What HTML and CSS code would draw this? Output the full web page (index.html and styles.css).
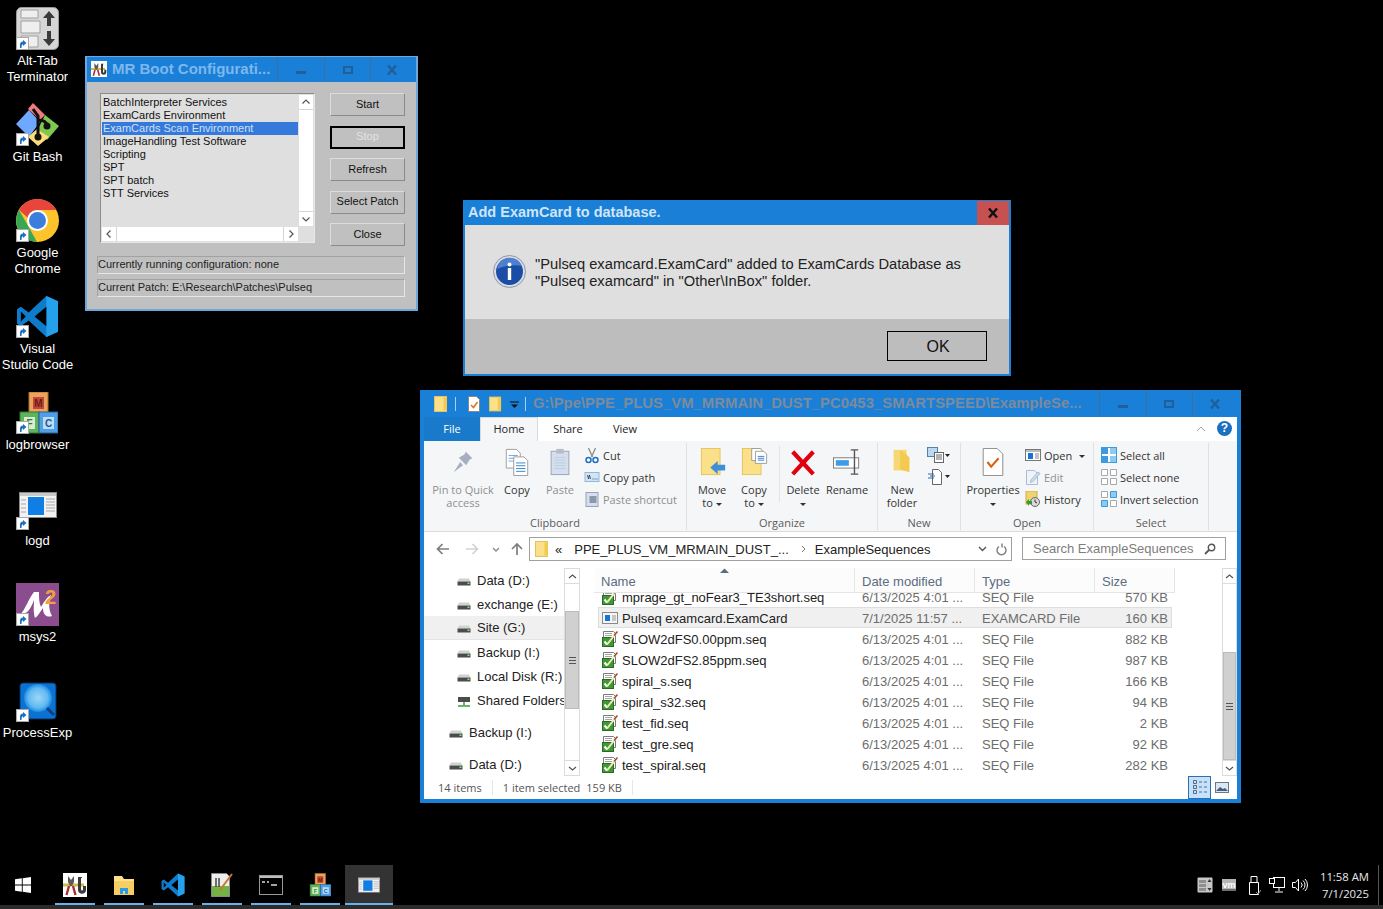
FILE: index.html
```html
<!DOCTYPE html>
<html lang="en">
<head>
  <meta charset="UTF-8">
  <title>Desktop</title>
  <link rel="stylesheet" href="styles.css">
</head>
<body>
  <!-- shared icons -->
  <svg class="defs" width="0" height="0" aria-hidden="true">
    <symbol id="i-shortcut" viewBox="0 0 13 13">
      <rect x=".5" y=".5" width="12" height="12" fill="#fff" stroke="#a8a8a8"/>
      <path d="M4 11V7.500C4 5.500 5.500 4.500 7 4.500V3l3.500 3L7 9V7.300C6 7.300 5.500 8.500 5.500 11z" fill="#1d6fc2"/>
    </symbol>
    <symbol id="i-vscode" viewBox="0 0 44 44">
      <path d="M31 1l12 5.500v31L31 43 13 26 5 32 1 29.500v-15L5 12l8 6z" fill="#0f7ccb"/>
      <path d="M31 1l12 5.500v31L31 43z" fill="#24a0ed"/>
      <path d="M31 12v20l-12-10z" fill="#000"/>
      <path d="M5 17v10l5-5z" fill="#000"/>
    </symbol>
    <symbol id="i-window" viewBox="0 0 38 26">
      <rect x=".5" y=".5" width="37" height="25" fill="#f2f2f2" stroke="#8a8a8a"/>
      <rect x="1" y="1" width="36" height="3" fill="#c9c9c9"/>
      <rect x="9" y="5" width="16" height="18" fill="#0f7fe6"/>
      <path d="M2 8h5M2 12h5M2 16h5M2 20h5M27 7h9M27 10h9M27 13h9M27 16h9M27 19h9" stroke="#a9a9a9"/>
    </symbol>
    <symbol id="i-drive" viewBox="0 0 14 8">
      <path d="M2 .5h10l1.500 3h-13z" fill="#d2d2d2"/>
      <rect x=".5" y="3.500" width="13" height="4" fill="#4c4c4c"/>
      <rect x="10.500" y="4.500" width="2" height="1.500" fill="#7fe07f"/>
    </symbol>
    <symbol id="i-seq" viewBox="0 0 16 16">
      <path d="M1.500.5h10l2 2v9h-2v4h-10z" fill="#fff" stroke="#7b7b7b"/>
      <path d="M3 2.500h7M3 4.500h7" stroke="#a5a5a5"/>
      <rect x=".5" y="6.500" width="11" height="9" fill="#3f9a34" stroke="#2a6a22"/>
      <path d="M2.500 10.500l2.500 3" fill="none" stroke="#fff" stroke-width="2"/>
      <path d="M5 13.500L15 1" stroke="#f2e9c0" stroke-width="2"/>
      <path d="M12 4.500L15.500 .5" stroke="#a0482a" stroke-width="1.500"/>
    </symbol>
    <symbol id="i-folder" viewBox="0 0 14 16">
      <rect x=".5" y=".5" width="12" height="15" fill="#fbe08a" stroke="#e5c25c"/>
      <path d="M9.500 1v14l3.500-1.500V2z" fill="#f4c94f"/>
    </symbol>
    <symbol id="i-x" viewBox="0 0 12 10">
      <path d="M2 .5l8 9M10 .5l-8 9" stroke="#1f5f9c" stroke-width="2.400"/>
    </symbol>
    <symbol id="i-boot" viewBox="0 0 24 24">
      <rect width="24" height="24" fill="#fff"/>
      <path d="M0 12h21" stroke="#d9b64a" stroke-width="3"/>
      <path d="M5 3l3 4 3-4v6l-2 4H7L5 9z" fill="#5a5a5a"/>
      <path d="M6 13L3.500 22M10 13l2.500 9" stroke="#a83030" stroke-width="2.400"/>
      <path d="M15 4h4v1h-1v11c0 2 2 2 2 0v-3h3v4c0 5-8 5-8 0z" fill="#3a3a3a"/>
    </symbol>
  </svg>

  <div class="desktop">
    <!-- desktop shortcuts -->
    <div class="shortcuts">
      <div class="shortcut">
        <div class="shortcut-icon">
          <svg width="43" height="43" viewBox="0 0 43 43">
            <rect x=".5" y=".5" width="42" height="42" rx="5" fill="#d6d6d6" stroke="#9a9a9a"/>
            <path d="M5 3h17v8H5zM5 14h19v12H5zM5 29h17v11H5z" fill="#efefef" stroke="#a0a0a0"/>
            <path d="M33 4l6 7h-4v8h-4v-8h-4zM33 39l6-7h-4v-8h-4v8h-4z" fill="#3a3a3a"/>
          </svg>
          <svg class="shortcut-arrow"><use href="#i-shortcut"/></svg>
        </div>
        <span>Alt-Tab<br>Terminator</span>
      </div>
      <div class="shortcut">
        <div class="shortcut-icon">
          <svg width="43" height="43" viewBox="0 0 43 43">
            <path d="M17 0l12 12-5 5L12 6z" fill="#f27c7c"/>
            <path d="M0 21L13 7l11 12-11 15z" fill="#6fa8ff"/>
            <path d="M29 12l14 11-12 14-9-11z" fill="#7ec850"/>
            <path d="M21 26l12 8-11 9-10-9z" fill="#ffdb7a"/>
            <path d="M17 6l5 7v20M22 17c3 0 8 1 9 5" fill="none" stroke="#111" stroke-width="3"/>
            <circle cx="22" cy="34" r="3.500" fill="#111"/>
            <circle cx="31" cy="23" r="3.500" fill="#111"/>
          </svg>
          <svg class="shortcut-arrow"><use href="#i-shortcut"/></svg>
        </div>
        <span>Git Bash</span>
      </div>
      <div class="shortcut">
        <div class="shortcut-icon">
          <svg width="43" height="43" viewBox="0 0 43 43">
            <circle cx="21.500" cy="21.500" r="21.500" fill="#fcc32c"/>
            <path d="M21.500 0a21.500 21.500 0 0 1 18.700 11H21.500a10.500 10.500 0 0 0-10 7.500L3 11A21.500 21.500 0 0 1 21.500 0z" fill="#e8453c"/>
            <path d="M3 11l10 17.500L21 43A21.500 21.500 0 0 1 3 11z" fill="#34a853"/>
            <circle cx="21.500" cy="21.500" r="10.500" fill="#fff"/>
            <circle cx="21.500" cy="21.500" r="8.500" fill="#3b7ede"/>
          </svg>
          <svg class="shortcut-arrow"><use href="#i-shortcut"/></svg>
        </div>
        <span>Google<br>Chrome</span>
      </div>
      <div class="shortcut">
        <div class="shortcut-icon">
          <svg width="43" height="43"><use href="#i-vscode"/></svg>
          <svg class="shortcut-arrow"><use href="#i-shortcut"/></svg>
        </div>
        <span>Visual<br>Studio Code</span>
      </div>
      <div class="shortcut">
        <div class="shortcut-icon">
          <svg width="40" height="42" viewBox="0 0 40 42">
            <rect x="11" y="0" width="19" height="21" fill="#eca45c" stroke="#a8702e"/>
            <rect x="15" y="5" width="11" height="12" fill="#c2473a"/>
            <text x="20.500" y="15" class="block-letter" fill="#6e1d14">M</text>
            <rect x="2" y="20" width="19" height="21" fill="#5fb35a" stroke="#2f7a33"/>
            <rect x="6" y="25" width="11" height="12" fill="#d9ecd2"/>
            <text x="11.500" y="35" class="block-letter" fill="#2f7a33">F</text>
            <rect x="21" y="20" width="19" height="21" fill="#4f9fe6" stroke="#26619c"/>
            <rect x="25" y="25" width="11" height="12" fill="#bcdcf6"/>
            <text x="30.500" y="35" class="block-letter" fill="#1d5a96">C</text>
          </svg>
          <svg class="shortcut-arrow"><use href="#i-shortcut"/></svg>
        </div>
        <span>logbrowser</span>
      </div>
      <div class="shortcut">
        <div class="shortcut-icon">
          <svg width="38" height="28" class="logd-pic"><use href="#i-window"/></svg>
          <svg class="shortcut-arrow"><use href="#i-shortcut"/></svg>
        </div>
        <span>logd</span>
      </div>
      <div class="shortcut">
        <div class="shortcut-icon">
          <svg width="43" height="43" viewBox="0 0 43 43">
            <rect width="43" height="43" fill="#8b4d8d"/>
            <path d="M4 32C9 27 13 15 18 9l5 0C23 15 23 20 25 24 28 19 31 14 35 12 33 18 32 26 36 33 31 35 27 32 27 25 24 29 22 33 19 35 17 29 18 22 18 17 15 25 12 31 4 32z" fill="#fff"/>
            <text x="29" y="21" class="msys-two">2</text>
          </svg>
          <svg class="shortcut-arrow"><use href="#i-shortcut"/></svg>
        </div>
        <span>msys2</span>
      </div>
      <div class="shortcut">
        <div class="shortcut-icon">
          <svg width="38" height="38" viewBox="0 0 38 38">
            <defs>
              <radialGradient id="pe-glow"><stop offset="0" stop-color="#9ad8f8"/><stop offset=".7" stop-color="#62b8f0"/><stop offset="1" stop-color="#1a8be6"/></radialGradient>
            </defs>
            <rect x="1" y="1" width="36" height="36" rx="3" fill="#0c72d2" stroke="#0a2f60"/>
            <circle cx="19" cy="16" r="14" fill="url(#pe-glow)"/>
            <path d="M28 26l7 7" stroke="#0a3f80" stroke-width="3"/>
          </svg>
          <svg class="shortcut-arrow"><use href="#i-shortcut"/></svg>
        </div>
        <span>ProcessExp</span>
      </div>
    </div>

    <!-- MR Boot window -->
    <div class="window boot">
      <div class="titlebar">
        <svg class="boot-icon"><use href="#i-boot"/></svg>
        <span class="title-text">MR Boot Configurati...</span>
        <div class="caption-btns">
          <span class="cap-btn"><i class="cap-min"></i></span>
          <span class="cap-btn"><i class="cap-max"></i></span>
          <span class="cap-btn"><svg width="12" height="10"><use href="#i-x"/></svg></span>
        </div>
      </div>
      <div class="boot-body">
        <div class="boot-top">
          <div class="boot-list">
            <ul>
              <li>BatchInterpreter Services</li>
              <li>ExamCards Environment</li>
              <li class="picked">ExamCards Scan Environment</li>
              <li>ImageHandling Test Software</li>
              <li>Scripting</li>
              <li>SPT</li>
              <li>SPT batch</li>
              <li>STT Services</li>
            </ul>
            <div class="boot-vscroll">
              <span><svg width="14" height="14" viewBox="0 0 14 14"><path d="M3.500 8.500L7 5l3.500 3.500" class="arrow"/></svg></span>
              <span><svg width="14" height="14" viewBox="0 0 14 14"><path d="M3.500 5.500L7 9l3.500-3.500" class="arrow"/></svg></span>
            </div>
            <div class="boot-hscroll">
              <span><svg width="14" height="14" viewBox="0 0 14 14"><path d="M8.500 3.500L5 7l3.500 3.500" class="arrow"/></svg></span>
              <span><svg width="14" height="14" viewBox="0 0 14 14"><path d="M5.500 3.500L9 7l-3.500 3.500" class="arrow"/></svg></span>
            </div>
          </div>
          <div class="boot-btns">
            <button type="button">Start</button>
            <button type="button" class="is-default" disabled>Stop</button>
            <button type="button">Refresh</button>
            <button type="button">Select Patch</button>
            <button type="button">Close</button>
          </div>
        </div>
        <div class="boot-status">Currently running configuration: none</div>
        <div class="boot-status">Current Patch: E:\Research\Patches\Pulseq</div>
      </div>
    </div>

    <!-- message box -->
    <div class="window dialog">
      <div class="dialog-title">
        <span>Add ExamCard to database.</span>
        <span class="dialog-close"><svg width="12" height="10" viewBox="0 0 12 10"><path d="M2 .5l8 9M10 .5l-8 9" stroke="#111" stroke-width="2.400"/></svg></span>
      </div>
      <div class="dialog-msg">
        <svg width="33" height="33" viewBox="0 0 33 33">
          <circle cx="16.500" cy="16.500" r="16" fill="#d8dde4" stroke="#8b97a8"/>
          <circle cx="16.500" cy="16.500" r="13.500" fill="#1c4da6"/>
          <path d="M4 14a13 13 0 0 1 25-3c-8-2-17 0-25 3z" fill="#4f7fcf"/>
          <circle cx="16.500" cy="9.500" r="2" fill="#fff"/>
          <rect x="14.800" y="13" width="3.400" height="12" fill="#fff"/>
        </svg>
        <p>"Pulseq examcard.ExamCard" added to ExamCards Database as<br>"Pulseq examcard" in "Other\InBox" folder.</p>
      </div>
      <div class="dialog-foot">
        <button type="button">OK</button>
      </div>
    </div>

    <!-- file explorer -->
    <div class="window explorer">
      <div class="ex-title">
        <svg width="14" height="16"><use href="#i-folder"/></svg>
        <i class="qat-sep"></i>
        <svg width="12" height="16" viewBox="0 0 12 16"><path d="M.5.5h8l3 3v12H.5z" fill="#fff" stroke="#888"/><path d="M3 9l2.500 2.500L9.500 6" fill="none" stroke="#d9741c" stroke-width="1.500"/></svg>
        <svg class="qat-folder" width="13" height="16"><use href="#i-folder"/></svg>
        <svg class="qat-down" width="9" height="8" viewBox="0 0 9 8"><path d="M0 1h9" stroke="#111"/><path d="M1 3.500h7L4.500 7z" fill="#111"/></svg>
        <i class="qat-sep"></i>
        <span class="ex-path">G:\Ppe\PPE_PLUS_VM_MRMAIN_DUST_PC0453_SMARTSPEED\ExampleSe...</span>
        <div class="ex-caption">
          <span class="cap-btn"><i class="cap-min"></i></span>
          <span class="cap-btn"><i class="cap-max"></i></span>
          <span class="cap-btn"><svg width="12" height="10"><use href="#i-x"/></svg></span>
        </div>
      </div>

      <div class="tabs">
        <span class="tab tab-file">File</span>
        <span class="tab tab-home">Home</span>
        <span class="tab tab-share">Share</span>
        <span class="tab tab-view">View</span>
        <svg class="tabs-chevron" width="10" height="6" viewBox="0 0 10 6"><path d="M1 5l4-4 4 4" fill="none" stroke="#a8a8a8"/></svg>
        <span class="help-dot">?</span>
      </div>

      <div class="ribbon">
        <section class="group group-clipboard">
          <div class="group-items">
            <div class="big w70 faded">
              <svg width="24" height="28" viewBox="0 0 24 30"><path d="M15 4l7 7-3 1.500-3.500 6-8-8 6-3.500zM9 15l-7 11 10-7.500z" fill="#a5afc0"/></svg>
              <span>Pin to Quick<br>access</span>
            </div>
            <div class="big w38">
              <svg width="26" height="28" viewBox="0 0 26 30"><path d="M1.500 1.500h11l4 4v16h-15z" fill="#fff" stroke="#9a9a9a"/><path d="M4 8h10M4 11h10M4 14h10" stroke="#6aa5e0"/><path d="M9.500 9.500h11l4 4v16h-15z" fill="#fff" stroke="#9a9a9a"/><path d="M12 16h10M12 19h10M12 22h10M12 25h10" stroke="#2f7fd0"/></svg>
              <span>Copy</span>
            </div>
            <div class="big w48 faded">
              <svg width="22" height="28" viewBox="0 0 22 30"><rect x="1.500" y="3.500" width="19" height="25" fill="#d5dff0" stroke="#9aa3b0"/><rect x="7" y="1" width="8" height="5" fill="#b6bdc8"/><path d="M5 10h12M5 13h12M5 16h12M5 19h12M5 22h12" stroke="#bcc9de"/></svg>
              <span>Paste</span>
            </div>
            <div class="small-col">
              <div class="small">
                <svg width="15" height="17" viewBox="0 0 15 17"><path d="M4 1l4 9M11 1L7 10" stroke="#8a8a8a" stroke-width="1.300"/><circle cx="4" cy="13" r="2.500" fill="none" stroke="#1d6fc2" stroke-width="1.500"/><circle cx="11" cy="13" r="2.500" fill="none" stroke="#1d6fc2" stroke-width="1.500"/></svg>
                <span>Cut</span>
              </div>
              <div class="small">
                <svg width="15" height="10" viewBox="0 0 15 10"><rect x=".5" y=".5" width="14" height="9" fill="#cfe5f8" stroke="#8fb8dc"/><path d="M3 3l1 4 1-4 1 4M8 7h1M10 7h1M12 7h1" fill="none" stroke="#333" stroke-width=".8"/></svg>
                <span>Copy path</span>
              </div>
              <div class="small faded">
                <svg width="13" height="16" viewBox="0 0 13 16"><rect x=".5" y="1.500" width="12" height="14" fill="#d5dff0" stroke="#9aa3b0"/><rect x="4" y="5" width="7" height="7" fill="#8b98ac"/></svg>
                <span>Paste shortcut</span>
              </div>
            </div>
          </div>
          <h4>Clipboard</h4>
        </section>

        <section class="group group-organize">
          <div class="group-items">
            <div class="big w42">
              <svg class="move-pic" width="27" height="28" viewBox="0 0 27 30"><rect x=".5" y=".5" width="20" height="28" fill="#fbe08a" stroke="#e5c25c"/><path d="M10 21l8-7v4h8v6h-8v4z" fill="#3f8fd8"/></svg>
              <span>Move<br>to <b class="caret"></b></span>
            </div>
            <div class="big w42">
              <svg width="27" height="28" viewBox="0 0 27 30"><rect x=".5" y=".5" width="20" height="28" fill="#fbe08a" stroke="#e5c25c"/><path d="M10.500 .5h9l3 3v10h-12z" fill="#fff" stroke="#999"/><path d="M14.500 3.500h9l3 3v10h-12z" fill="#fff" stroke="#999"/><path d="M17 9h7M17 11h7M17 13h7" stroke="#2f7fd0"/></svg>
              <span>Copy<br>to <b class="caret"></b></span>
            </div>
            <i class="group-rule"></i>
            <div class="big w46">
              <svg width="26" height="28" viewBox="0 0 26 30"><path d="M2 4l22 24M24 4L2 28" stroke="#e0000f" stroke-width="4.500"/></svg>
              <span>Delete<br><b class="caret"></b></span>
            </div>
            <div class="big w42">
              <svg width="30" height="28" viewBox="0 0 30 30"><rect x=".5" y="10.500" width="27" height="11" fill="#fff" stroke="#777"/><rect x="3" y="13" width="14" height="6" fill="#3f9be8"/><path d="M19 2h8M19 28h8M23 2v26" stroke="#555" stroke-width="1.500"/></svg>
              <span>Rename</span>
            </div>
          </div>
          <h4>Organize</h4>
        </section>

        <section class="group group-new">
          <div class="group-items">
            <div class="big w44">
              <svg width="22" height="28" viewBox="0 0 22 30"><path d="M2 2l14 0v22H2z" fill="#f7d774"/><path d="M9 2l10 8v16l-10-3z" fill="#f4c94f"/></svg>
              <span>New<br>folder</span>
            </div>
            <div class="small-col new-col">
              <div class="small">
                <svg width="23" height="16" viewBox="0 0 23 16"><rect x=".5" y=".5" width="10" height="9" fill="#bcd8f2" stroke="#5a7fa6"/><rect x="7.500" y="5.500" width="9" height="10" fill="#fff" stroke="#666"/><path d="M9 8h6M9 10h6M9 12h6" stroke="#666"/><path d="M18 7h5l-2.500 3z" fill="#222"/></svg>
              </div>
              <div class="small">
                <svg width="23" height="16" viewBox="0 0 23 16"><path d="M5.500.5h6l3 3v12h-9z" fill="#fff" stroke="#666"/><path d="M1 5h6M3 7h5M1 9h6" stroke="#2f6ea8"/><path d="M18 6h5l-2.500 3z" fill="#222"/></svg>
              </div>
            </div>
          </div>
          <h4>New</h4>
        </section>

        <section class="group group-open">
          <div class="group-items">
            <div class="big w56">
              <svg width="22" height="28" viewBox="0 0 22 30"><path d="M.5.5h15l6 6v23H.500z" fill="#fff" stroke="#888"/><path d="M5 15l4 5 8-9" fill="none" stroke="#d9620f" stroke-width="2.200"/></svg>
              <span>Properties<br><b class="caret"></b></span>
            </div>
            <div class="small-col open-col">
              <div class="small">
                <svg width="16" height="12" viewBox="0 0 16 12"><rect x=".5" y=".5" width="15" height="11" fill="#fff" stroke="#777"/><rect x="1" y="1" width="14" height="2" fill="#bbb"/><rect x="3" y="4" width="5" height="6" fill="#1473d8"/><path d="M10 5h4M10 7h4M10 9h4" stroke="#888"/></svg>
                <span>Open <b class="caret caret-far"></b></span>
              </div>
              <div class="small faded">
                <svg width="16" height="16" viewBox="0 0 16 16"><path d="M1.500 1.500h8l3 3v11h-11z" fill="#eef3fa" stroke="#a9bcd6"/><path d="M6 11l7-8 2 1.500-7 8-2.500 1z" fill="#cfdcec" stroke="#a9bcd6"/></svg>
                <span>Edit</span>
              </div>
              <div class="small">
                <svg width="16" height="16" viewBox="0 0 16 16"><rect x="1" y="0" width="11" height="13" fill="#f0d36e" stroke="#cdac43"/><circle cx="10" cy="11" r="4.500" fill="#d8d8d8" stroke="#666"/><path d="M10 8.500V11l2 1" fill="none" stroke="#333"/><path d="M1 11l3-3v2h3v3H4v2z" fill="#2f9e3b"/></svg>
                <span>History</span>
              </div>
            </div>
          </div>
          <h4>Open</h4>
        </section>

        <section class="group group-select">
          <div class="group-items">
            <div class="small-col select-col">
              <div class="small">
                <svg width="16" height="16" viewBox="0 0 16 16"><rect x=".5" y=".5" width="15" height="15" fill="#fff" stroke="#3c9be0"/><rect x="1" y="1" width="6" height="6" fill="#3c9be0"/><rect x="9" y="1" width="6" height="6" fill="#8fcbef"/><rect x="1" y="9" width="6" height="6" fill="#3c9be0"/><rect x="9" y="9" width="6" height="6" fill="#8fcbef"/></svg>
                <span>Select all</span>
              </div>
              <div class="small">
                <svg width="16" height="16" viewBox="0 0 16 16"><path d="M.5.5h6v6h-6zM9.500.5h6v6h-6zM.5 9.500h6v6h-6zM9.500 9.500h6v6h-6z" fill="#fff" stroke="#a8a8a8"/></svg>
                <span>Select none</span>
              </div>
              <div class="small">
                <svg width="16" height="16" viewBox="0 0 16 16"><path d="M.5.5h6v6h-6zM9.500 9.500h6v6h-6z" fill="#fff" stroke="#a8a8a8"/><path d="M9.500.5h6v6h-6zM.5 9.500h6v6h-6z" fill="#8fcbef" stroke="#3c9be0"/></svg>
                <span>Invert selection</span>
              </div>
            </div>
          </div>
          <h4>Select</h4>
        </section>
      </div>

      <div class="address-row">
        <div class="nav-arrows">
          <svg width="14" height="12" viewBox="0 0 14 12"><path d="M13 6H2M6.500 1L1.500 6l5 5" fill="none" stroke="#7d7d7d" stroke-width="1.700"/></svg>
          <svg class="nav-fwd" width="14" height="12" viewBox="0 0 14 12"><path d="M1 6h11M7.500 1l5 5-5 5" fill="none" stroke="#d2d2d2" stroke-width="1.700"/></svg>
          <svg class="nav-down" width="8" height="5" viewBox="0 0 8 5"><path d="M1 1l3 3 3-3" fill="none" stroke="#888" stroke-width="1.300"/></svg>
          <svg class="nav-up" width="12" height="14" viewBox="0 0 12 14"><path d="M6 13V2M1 7l5-5 5 5" fill="none" stroke="#7d7d7d" stroke-width="1.700"/></svg>
        </div>
        <div class="address">
          <svg width="14" height="16"><use href="#i-folder"/></svg>
          <span class="crumb-more">«</span>
          <span class="crumb">PPE_PLUS_VM_MRMAIN_DUST_...</span>
          <svg class="crumb-sep" width="5" height="8" viewBox="0 0 5 8"><path d="M1 1l3 3-3 3" fill="none" stroke="#777"/></svg>
          <span class="crumb-last">ExampleSequences</span>
          <svg class="addr-down" width="9" height="6" viewBox="0 0 9 6"><path d="M1 1l3.500 3.500L8 1" fill="none" stroke="#555" stroke-width="1.400"/></svg>
          <svg class="addr-refresh" width="11" height="13" viewBox="0 0 11 13"><path d="M3 3.500a4.500 4.500 0 1 0 5 0M6 .5v4" fill="none" stroke="#7d7d7d" stroke-width="1.400"/></svg>
        </div>
        <div class="search">
          <span>Search ExampleSequences</span>
          <svg width="12" height="12" viewBox="0 0 12 12"><circle cx="7.500" cy="4.500" r="3.200" fill="none" stroke="#555" stroke-width="1.400"/><path d="M5 7l-4 4" stroke="#555" stroke-width="1.800"/></svg>
        </div>
      </div>

      <div class="panes">
        <div class="tree">
          <div class="tree-row"><svg width="14" height="8"><use href="#i-drive"/></svg>Data (D:)</div>
          <div class="tree-row"><svg width="14" height="8"><use href="#i-drive"/></svg>exchange (E:)</div>
          <div class="tree-row is-on"><svg width="14" height="8"><use href="#i-drive"/></svg>Site (G:)</div>
          <div class="tree-row"><svg width="14" height="8"><use href="#i-drive"/></svg>Backup (I:)</div>
          <div class="tree-row"><svg width="14" height="8"><use href="#i-drive"/></svg>Local Disk (R:)</div>
          <div class="tree-row"><svg width="14" height="10" viewBox="0 0 14 10"><rect x="1" y="0" width="12" height="5" fill="#4c4c4c"/><path d="M7 5v3M1 9h12" stroke="#3e9b3e" stroke-width="1.500"/></svg>Shared Folders</div>
          <div class="tree-row tree-top"><svg width="14" height="8"><use href="#i-drive"/></svg>Backup (I:)</div>
          <div class="tree-row tree-top tree-last"><svg width="14" height="8"><use href="#i-drive"/></svg>Data (D:)</div>
        </div>
        <div class="scrollbar tree-scroll">
          <span class="sb-btn"><svg width="9" height="5" viewBox="0 0 9 5"><path d="M1 4l3.500-3L8 4" class="arrow"/></svg></span>
          <span class="sb-thumb"><i></i></span>
          <span class="sb-btn"><svg width="9" height="5" viewBox="0 0 9 5"><path d="M1 1l3.500 3L8 1" class="arrow"/></svg></span>
        </div>
        <div class="files">
          <div class="file-head">
            <span class="col-name">Name<svg class="sort-mark" width="9" height="5" viewBox="0 0 9 5"><path d="M0 5l4.500-4.500L9 5z" fill="#5b6b80"/></svg></span>
            <span class="col-date">Date modified</span>
            <span class="col-type">Type</span>
            <span class="col-size">Size</span>
          </div>
          <div class="file-body">
            <div class="file-rows">
              <div class="file-row"><span class="col-name"><svg width="16" height="16"><use href="#i-seq"/></svg>mprage_gt_noFear3_TE3short.seq</span><span class="col-date">6/13/2025 4:01 ...</span><span class="col-type">SEQ File</span><span class="col-size">570 KB</span></div>
              <div class="file-row is-on"><span class="col-name"><svg width="16" height="16" viewBox="0 0 16 16"><rect x=".5" y="2.500" width="15" height="11" fill="#f4f4f4" stroke="#8a8a8a"/><rect x="3" y="5" width="5" height="6" fill="#1473d8"/><path d="M10 6h4M10 8h4M10 10h4" stroke="#999"/></svg>Pulseq examcard.ExamCard</span><span class="col-date">7/1/2025 11:57 ...</span><span class="col-type">EXAMCARD File</span><span class="col-size">160 KB</span></div>
              <div class="file-row"><span class="col-name"><svg width="16" height="16"><use href="#i-seq"/></svg>SLOW2dFS0.00ppm.seq</span><span class="col-date">6/13/2025 4:01 ...</span><span class="col-type">SEQ File</span><span class="col-size">882 KB</span></div>
              <div class="file-row"><span class="col-name"><svg width="16" height="16"><use href="#i-seq"/></svg>SLOW2dFS2.85ppm.seq</span><span class="col-date">6/13/2025 4:01 ...</span><span class="col-type">SEQ File</span><span class="col-size">987 KB</span></div>
              <div class="file-row"><span class="col-name"><svg width="16" height="16"><use href="#i-seq"/></svg>spiral_s.seq</span><span class="col-date">6/13/2025 4:01 ...</span><span class="col-type">SEQ File</span><span class="col-size">166 KB</span></div>
              <div class="file-row"><span class="col-name"><svg width="16" height="16"><use href="#i-seq"/></svg>spiral_s32.seq</span><span class="col-date">6/13/2025 4:01 ...</span><span class="col-type">SEQ File</span><span class="col-size">94 KB</span></div>
              <div class="file-row"><span class="col-name"><svg width="16" height="16"><use href="#i-seq"/></svg>test_fid.seq</span><span class="col-date">6/13/2025 4:01 ...</span><span class="col-type">SEQ File</span><span class="col-size">2 KB</span></div>
              <div class="file-row"><span class="col-name"><svg width="16" height="16"><use href="#i-seq"/></svg>test_gre.seq</span><span class="col-date">6/13/2025 4:01 ...</span><span class="col-type">SEQ File</span><span class="col-size">92 KB</span></div>
              <div class="file-row"><span class="col-name"><svg width="16" height="16"><use href="#i-seq"/></svg>test_spiral.seq</span><span class="col-date">6/13/2025 4:01 ...</span><span class="col-type">SEQ File</span><span class="col-size">282 KB</span></div>
            </div>
          </div>
        </div>
        <div class="scrollbar list-scroll">
          <span class="sb-btn"><svg width="9" height="5" viewBox="0 0 9 5"><path d="M1 4l3.500-3L8 4" class="arrow"/></svg></span>
          <span class="sb-thumb"><i></i></span>
          <span class="sb-btn"><svg width="9" height="5" viewBox="0 0 9 5"><path d="M1 1l3.500 3L8 1" class="arrow"/></svg></span>
        </div>
      </div>

      <div class="statusbar">
        <span class="st-count">14 items</span>
        <span class="st-sel">1 item selected</span>
        <span class="st-size">159 KB</span>
        <span class="st-views">
          <span class="view-btn is-on"><svg width="16" height="16" viewBox="0 0 16 16"><path d="M1.500 1.500h3v3h-3zM1.500 6.500h3v3h-3zM1.500 11.500h3v3h-3z" fill="none" stroke="#5a6c80"/><path d="M7 3h3M12 3h3M7 8h3M12 8h3M7 13h3M12 13h3" stroke="#5a6c80"/></svg></span>
          <span class="view-btn"><svg width="14" height="11" viewBox="0 0 14 11"><rect x=".5" y=".5" width="13" height="10" fill="#dbe7f2" stroke="#6b7888"/><path d="M1 9l4-4 3 2 2-1 3 3z" fill="#43607f"/></svg></span>
        </span>
      </div>
    </div>

    <!-- taskbar -->
    <div class="taskbar">
      <div class="start">
        <svg width="16" height="16" viewBox="0 0 16 16"><path d="M0 2.300l6.800-1v6.200H0zM7.700 1.200L16 0v7.500H7.700zM0 8.400h6.800v6.300l-6.800-1zM7.700 8.400H16V16l-8.300-1.200z" fill="#fff"/></svg>
      </div>
      <div class="task">
        <svg width="24" height="24"><use href="#i-boot"/></svg>
      </div>
      <div class="task">
        <svg width="22" height="20" viewBox="0 0 22 20"><path d="M1 1h8l2 3h10v16H1z" fill="#fce08a"/><path d="M1 6h20v14H1z" fill="#f6cf62"/><path d="M7 19v-6h8v6h-3v-3h-2v3z" fill="#2a9be8"/></svg>
      </div>
      <div class="task">
        <svg width="24" height="24"><use href="#i-vscode"/></svg>
      </div>
      <div class="task">
        <svg width="22" height="24" viewBox="0 0 22 24"><path d="M.5.5h15l3 3v20H.5z" fill="#eee" stroke="#888"/><rect x="1" y="13" width="17" height="10" fill="#74b247"/><path d="M5 5v9M8 5v9" stroke="#444" stroke-width="1.500"/><path d="M9 17L21 1" stroke="#c9792e" stroke-width="2"/></svg>
      </div>
      <div class="task">
        <svg width="24" height="20" viewBox="0 0 24 20"><rect x=".5" y=".5" width="23" height="19" fill="#000" stroke="#999"/><rect x="1" y="1" width="22" height="2" fill="#bdbdbd"/><path d="M3 7h3M8 7h2M12 10h6" stroke="#d8d8d8" stroke-width="1.500"/></svg>
      </div>
      <div class="task">
        <svg width="22" height="24" viewBox="0 0 40 42">
          <rect x="11" y="0" width="19" height="21" fill="#eca45c" stroke="#a8702e"/>
          <rect x="15" y="5" width="11" height="12" fill="#c2473a"/>
          <text x="20.500" y="15" class="block-letter" fill="#6e1d14">M</text>
          <rect x="2" y="20" width="19" height="21" fill="#5fb35a" stroke="#2f7a33"/>
          <rect x="6" y="25" width="11" height="12" fill="#d9ecd2"/>
          <text x="11.500" y="35" class="block-letter" fill="#2f7a33">F</text>
          <rect x="21" y="20" width="19" height="21" fill="#4f9fe6" stroke="#26619c"/>
          <rect x="25" y="25" width="11" height="12" fill="#bcdcf6"/>
          <text x="30.500" y="35" class="block-letter" fill="#1d5a96">C</text>
        </svg>
      </div>
      <div class="task task-active">
        <svg width="22" height="16"><use href="#i-window"/></svg>
      </div>

      <div class="tray">
        <svg class="tray-alt" width="16" height="16" viewBox="0 0 16 16"><rect x=".5" y=".5" width="15" height="15" rx="1" fill="#c8c8c8"/><path d="M2 3h7v3H2zM2 7h7v3H2zM2 11h7v3H2z" fill="#8e8e8e"/><path d="M12.500 2l2 3h-4zM12.500 14l2-3h-4z" fill="#333"/></svg>
        <svg class="tray-vm" width="14" height="12" viewBox="0 0 14 12"><rect width="14" height="12" fill="#b5b5b5"/><rect y="10" width="14" height="2" fill="#6e6e6e"/><text x="7" y="8.500" class="vm-mark">vm</text></svg>
        <svg class="tray-usb" width="13" height="19" viewBox="0 0 13 19"><path d="M3 .5h6v6H3zM1.500 6.500h9v12h-9z" fill="none" stroke="#fff"/><path d="M8 16l2 2 3-4" fill="none" stroke="#999"/></svg>
        <svg class="tray-net" width="16" height="16" viewBox="0 0 16 16"><rect x="4.500" y=".5" width="11" height="10" fill="none" stroke="#fff"/><rect x=".5" y="1.500" width="5" height="5" fill="#000" stroke="#fff"/><path d="M10 11v3M6 15h8" stroke="#fff"/></svg>
        <svg class="tray-vol" width="16" height="14" viewBox="0 0 16 14"><path d="M.5 4.500h3l3-3.500v12l-3-3.500h-3z" fill="none" stroke="#fff"/><path d="M9 4.500a3.500 3.500 0 0 1 0 5M11 2.500a6 6 0 0 1 0 9M13 1a8.500 8.500 0 0 1 0 12" fill="none" stroke="#fff"/></svg>
        <div class="clock"><span>11:58 AM</span><span>7/1/2025</span></div>
        <i class="show-desktop"></i>
      </div>
    </div>
  </div>
</body>
</html>
```

FILE: styles.css
```css
* { box-sizing: border-box; }
html, body { margin: 0; height: 100%; }
body {
  background: #000;
  font-family: "Liberation Sans", Arial, sans-serif;
  overflow: hidden;
}
.defs { position: absolute; }
svg { display: block; flex: none; }
.arrow { fill: none; stroke: #555; stroke-width: 1.2; }
.block-letter { font: bold 10px "Liberation Sans", sans-serif; text-anchor: middle; }
.msys-two { font: bold 20px "Liberation Sans", sans-serif; fill: #f0a13c; }
.vm-mark { font: bold 9px "Liberation Sans", sans-serif; fill: #fff; text-anchor: middle; }

.desktop { position: relative; width: 1383px; height: 909px; background: #000; }

/* desktop icons */
.shortcuts {
  position: absolute;
  left: 0;
  top: 8px;
  display: grid;
  grid-auto-rows: 96px;
  width: 75px;
}
.shortcut {
  display: flex;
  flex-direction: column;
  align-items: center;
  color: #fff;
  font-size: 13px;
  line-height: 16px;
  text-align: center;
  white-space: nowrap;
}
.shortcut-icon {
  position: relative;
  width: 43px;
  height: 43px;
  margin: -1px 0 3px;
  display: flex;
  align-items: center;
  justify-content: center;
}
.shortcut-arrow { position: absolute; left: 0; bottom: 0; width: 13px; height: 13px; }
.logd-pic { margin-top: -8px; }

/* windows */
.window { position: absolute; }
.cap-btn {
  display: flex;
  align-items: center;
  justify-content: center;
  border-left: 1px solid #3f6f9d;
}
.cap-min { width: 10px; height: 3px; margin-top: 5px; background: #1f5f9c; }
.cap-max { width: 10px; height: 8px; border: 2px solid #1f5f9c; }

/* MR Boot */
.boot {
  left: 85px;
  top: 56px;
  width: 333px;
  height: 255px;
  background: #c0c0c0;
  border: 1px solid #6ea7db;
  border-width: 1px 2px 2px;
  font-size: 11px;
  line-height: 13px;
  color: #000;
}
.titlebar {
  height: 25px;
  background: #1a7fd6;
  display: flex;
  align-items: center;
  padding-left: 4px;
}
.boot-icon { width: 16px; height: 16px; margin-top: -1px; }
.title-text { margin: -2px 0 0 5px; font: bold 15px "Liberation Sans", sans-serif; color: #7cb8ee; }
.caption-btns {
  margin-left: auto;
  height: 100%;
  display: grid;
  grid-template-columns: 47px 46px 46px;
}
.caption-btns .cap-btn:last-child { padding-right: 3px; }
.boot-body { padding: 11px 11px 0 10px; }
.boot-top { display: flex; padding-left: 3px; }
.boot-list {
  width: 216px;
  height: 150px;
  border: 1px solid #e8e8e8;
  border-top-color: #8c8c8c;
  border-left-color: #8c8c8c;
  display: grid;
  grid-template-columns: 1fr 15px;
  grid-template-rows: 1fr 15px;
  padding: 1px;
  background: #dfdfdf;
}
.boot-list ul { list-style: none; margin: 0; padding: 1px 0 0; }
.boot-list li { height: 13px; padding-left: 1px; white-space: nowrap; color: #111; }
.boot-list li.picked { background: #3579db; color: #cfe0f5; }
.boot-vscroll {
  background: #fff;
  display: flex;
  flex-direction: column;
  justify-content: space-between;
  margin-left: 1px;
}
.boot-vscroll span { height: 15px; display: flex; align-items: center; justify-content: center; border: solid #d4d4d4; border-width: 0 0 1px; }
.boot-vscroll span:last-child { border-width: 1px 0 0; }
.boot-hscroll {
  background: #fff;
  display: flex;
  justify-content: space-between;
  margin-top: 1px;
}
.boot-hscroll span { width: 15px; display: flex; align-items: center; justify-content: center; border: solid #d4d4d4; border-width: 0 1px 0 0; }
.boot-hscroll span:last-child { border-width: 0 0 0 1px; }
.boot-btns {
  margin-left: 15px;
  display: grid;
  grid-template-columns: 75px;
  grid-auto-rows: 23px;
  row-gap: 9.500px;
}
.boot-btns button {
  background: #c0c0c0;
  border: 1px solid;
  border-color: #dcdcdc #8a8a8a #8a8a8a #dcdcdc;
  font: 11px "Liberation Sans", sans-serif;
  color: #111;
  padding: 0 0 2px;
}
.boot-btns .is-default { border: 2px solid #000; color: #e2e2e2; }
.boot-status {
  height: 18px;
  margin-top: 5px;
  border: 1px solid #e6e6e6;
  border-top-color: #a2a2a2;
  border-left-color: #a2a2a2;
  padding: 1px 0 0;
  color: #222;
}
.boot-top + .boot-status { margin-top: 10px; }

/* message box */
.dialog {
  left: 463px;
  top: 200px;
  width: 548px;
  height: 176px;
  border: 2px solid #1a7fd6;
  border-top-width: 0;
  display: flex;
  flex-direction: column;
  background: #dfdfdf;
}
.dialog-title {
  height: 25px;
  background: #1a7fd6;
  display: flex;
  justify-content: space-between;
  align-items: center;
  padding-left: 3px;
  font: bold 14.500px "Liberation Sans", sans-serif;
  color: #cfe5f9;
}
.dialog-title > span:first-child { margin-top: -2px; }
.dialog-close {
  width: 32px;
  height: 24px;
  margin-top: 1px;
  background: #c75050;
  display: flex;
  align-items: center;
  justify-content: center;
}
.dialog-msg {
  height: 94px;
  padding: 30px 0 0 28px;
  display: flex;
  align-items: flex-start;
}
.dialog-msg p {
  margin: 1px 0 0 9px;
  font-size: 14.700px;
  line-height: 17px;
  color: #222;
}
.dialog-foot {
  flex: 1;
  background: #bdbdbd;
  display: flex;
  justify-content: flex-end;
  padding: 12px 22px 0 0;
}
.dialog-foot button {
  width: 100px;
  height: 30px;
  padding: 2px 0 0 2px;
  background: #bdbdbd;
  border: 1px solid #000;
  font: 16px "Liberation Sans", sans-serif;
  color: #111;
}

/* explorer */
.explorer {
  left: 420px;
  top: 390px;
  width: 821px;
  height: 413px;
  background: #fff;
  border: 4px solid #1a7fd6;
  border-top-width: 0;
  color: #222;
}
.ex-title {
  height: 27px;
  margin: 0 -4px;
  padding-left: 14px;
  background: #1a7fd6;
  display: flex;
  align-items: center;
}
.qat-sep { width: 1px; height: 14px; background: #a9d0f0; margin: 0 12px 0 7px; }
.qat-folder { margin-left: 9px; }
.qat-down { margin: 2px 0 0 8px; }
.ex-title .qat-down + .qat-sep { margin: 0 7px 0 6px; }
.ex-path { margin-top: -2px; font: bold 14.900px "Liberation Sans", sans-serif; color: #7c8b9c; white-space: nowrap; }
.ex-caption {
  margin-left: auto;
  height: 100%;
  display: grid;
  grid-template-columns: 47px 46px 49px;
}
.ex-caption .cap-btn:nth-child(2) { padding-right: 2px; }
.ex-caption .cap-btn:last-child { padding-right: 5px; }

.tabs {
  height: 24px;
  display: flex;
  align-items: stretch;
  background: #fff;
  font: 11px "Open Sans", sans-serif;
  position: relative;
}
.tab { display: flex; align-items: center; justify-content: center; padding-bottom: 2px; }
.tab-file { width: 56px; background: #1979ca; color: #fff; }
.tab-home { width: 58px; border: 1px solid #dadbdc; border-width: 1px 1px 0; background: #f5f6f7; }
.tab-share { margin-left: 15px; width: 30px; }
.tab-view { margin-left: 29px; width: 26px; }
.tabs-chevron { margin: 9px 0 0 auto; }
.help-dot {
  width: 15px;
  height: 15px;
  border-radius: 50%;
  background: #1a6fc0;
  color: #fff;
  font: bold 12px/15px "Liberation Sans", sans-serif;
  text-align: center;
  margin: 4px 5px 0 11px;
}

.ribbon {
  height: 92px;
  background: #f5f6f7;
  border-bottom: 1px solid #dadbdc;
  border-top: 1px solid #dadbdc;
  margin-top: -1px;
  display: flex;
  font: 11px/13px "Open Sans", sans-serif;
  color: #333;
}
.group {
  display: flex;
  flex-direction: column;
  justify-content: space-between;
  border-right: 1px solid #dfe0e1;
  margin: 2px 0 1px;
}
.group h4 {
  margin: 0;
  font: 11px/14px "Open Sans", sans-serif;
  color: #5b5b5b;
  text-align: center;
}
.group-items { display: flex; padding-left: 4px; }
.group-clipboard { width: 263px; }
.group-organize { width: 191px; }
.group-new { width: 83px; }
.group-new .group-items { padding-left: 2px; }
.group-open { width: 133px; }
.group-select { width: 115px; }
.big {
  display: flex;
  flex-direction: column;
  align-items: center;
  text-align: center;
  padding-top: 5px;
  white-space: nowrap;
}
.big span { margin-top: 7px; }
.move-pic { margin-left: 3px; }
.w38 { width: 38px; }
.w42 { width: 42px; }
.w44 { width: 44px; }
.w46 { width: 46px; }
.w48 { width: 48px; }
.w56 { width: 56px; }
.w70 { width: 70px; }
.faded { color: #8f8f8f; }
.caret {
  display: inline-block;
  width: 0;
  height: 0;
  border: 3px solid transparent;
  border-top: 3px solid #333;
  border-bottom: 0;
  vertical-align: middle;
}
.caret-far { margin-left: 4px; }
.group-rule { width: 1px; height: 56px; margin: 3px 0 0 4px; background: #e2e3e4; }
.small-col { display: grid; grid-auto-rows: 22px; padding-top: 1px; }
.small {
  display: flex;
  align-items: center;
  gap: 3px;
  white-space: nowrap;
}
.small-col .small > svg { width: 16px; }
.new-col .small > svg { width: 23px; }
.new-col { margin-left: 3px; }
.open-col { margin-left: 4px; }
.select-col { margin-left: 3px; }

.address-row {
  height: 24px;
  margin-top: 5px;
  display: flex;
  align-items: stretch;
}
.nav-arrows {
  width: 105px;
  padding: 0 6px 0 12px;
  display: flex;
  align-items: center;
}
.nav-fwd { margin-left: 15px; }
.nav-down { margin-left: 13px; }
.nav-up { margin-left: 11px; }
.address {
  width: 483px;
  border: 1px solid #a0a0a0;
  display: flex;
  align-items: center;
  padding-left: 5px;
  font: 13px "Liberation Sans", sans-serif;
  color: #222;
  white-space: nowrap;
}
.crumb-more { margin-left: 6px; }
.crumb { margin-left: 12px; }
.crumb-sep { margin-left: 12px; }
.crumb-last { margin-left: 9px; }
.addr-down { margin-left: auto; }
.addr-refresh { margin: 0 4px 0 9px; }
.search {
  width: 204px;
  height: 23px;
  margin-left: 10px;
  border: 1px solid #a0a0a0;
  display: flex;
  align-items: center;
  justify-content: space-between;
  padding: 0 9px 0 10px;
  font: 13px "Liberation Sans", sans-serif;
  color: #7d7d7d;
  white-space: nowrap;
}

.panes {
  height: 207px;
  margin-top: 7px;
  display: grid;
  grid-template-columns: 140px 16px 642px 15px;
  font: 13px "Liberation Sans", sans-serif;
}
.tree { overflow: hidden; }
.tree-row {
  height: 24px;
  display: flex;
  align-items: center;
  gap: 6px;
  padding-left: 33px;
  white-space: nowrap;
  color: #222;
}
.tree-row svg { margin-top: 3px; }
.tree-row.is-on { background: #f0f0f0; border-bottom: 1px solid #e4e4e4; }
.tree-top { padding-left: 25px; margin-top: 8px; }
.tree-last { margin-top: 8px; }
.scrollbar {
  display: flex;
  flex-direction: column;
  border: 1px solid #dcdcdc;
  background: #fff;
  position: relative;
}
.sb-btn {
  height: 15px;
  display: flex;
  align-items: center;
  justify-content: center;
}
.sb-btn:last-child { margin-top: auto; border-top: 1px solid #dcdcdc; }
.sb-btn:first-child { border-bottom: 1px solid #dcdcdc; }
.sb-thumb {
  background: #d0d0d0;
  border: 1px solid #bcbcbc;
  display: flex;
  align-items: center;
  justify-content: center;
}
.sb-thumb i {
  width: 7px;
  height: 7px;
  border-top: 1px solid #555;
  border-bottom: 1px solid #555;
  background: linear-gradient(#555, #555) center / 100% 1px no-repeat;
}
.tree-scroll .sb-thumb { height: 98px; margin-top: 27px; }
.list-scroll .sb-thumb { height: 108px; margin-top: 68px; }

.files {
  padding: 0 0 0 4px;
  overflow: hidden;
  display: flex;
  flex-direction: column;
}
.file-head {
  display: grid;
  height: 25px;
  margin-left: 10px;
  width: 581px;
  grid-template-columns: 261px 120px 120px 80px;
  background: #fcfcfc;
  border-bottom: 1px solid #e5e5e5;
  color: #5b6b80;
  flex: none;
}
.file-head span {
  display: flex;
  align-items: center;
  padding: 2px 0 0 7px;
  border-right: 1px solid #e5e5e5;
  position: relative;
}
.sort-mark { position: absolute; left: 126px; top: 0; }
.file-body { overflow: hidden; flex: 1; }
.file-rows { margin: -7px 0 0 14px; }
.file-row {
  display: grid;
  height: 21px;
  width: 574px;
  padding-top: 1px;
  grid-template-columns: 258px 120px 110px 84px;
  align-items: center;
  border: 1px solid transparent;
  color: #6d6d6d;
  white-space: nowrap;
}
.file-row .col-name {
  display: flex;
  align-items: center;
  gap: 4px;
  padding-left: 3px;
  color: #222;
}
.file-row .col-date { padding-left: 5px; }
.file-row .col-type { padding-left: 5px; }
.file-row .col-size { text-align: right; padding-right: 3px; }
.file-row.is-on { background: #f0f0f0; border-color: #dedede; }

.statusbar {
  height: 24px;
  padding-left: 14px;
  display: flex;
  align-items: center;
  font: 11px "Open Sans", sans-serif;
  color: #555;
  background: #fff;
}
.st-sel { margin-left: 10px; padding-left: 10px; border-left: 1px solid #e6e6e6; }
.st-size { margin-left: 6px; padding-right: 10px; border-right: 1px solid #e6e6e6; }
.st-views { margin-left: auto; display: flex; align-items: center; gap: 3px; padding-right: 8px; height: 100%; }
.view-btn { display: flex; align-items: center; justify-content: center; width: 15px; }
.view-btn.is-on { width: 23px; height: 23px; background: #c4e2fb; border: 1px solid #2f6fb0; }

/* taskbar */
.taskbar {
  position: absolute;
  left: 0;
  right: 0;
  top: 865px;
  height: 44px;
  border-bottom: 4px solid #2b2b2b;
  display: flex;
  align-items: stretch;
  color: #fff;
  gap: 9px;
}
.start {
  width: 46px;
  display: flex;
  align-items: center;
  justify-content: center;
}
.task {
  width: 40px;
  display: flex;
  align-items: center;
  justify-content: center;
  border-bottom: 2px solid #6ab0e8;
  padding-top: 1px;
}
.task-active { width: 48px; margin-left: -4px; background: #333; }
.tray {
  margin-left: auto;
  display: flex;
  align-items: center;
  padding-right: 4px;
}
.tray-vm { margin-left: 9px; }
.tray-usb { margin-left: 12px; }
.tray-net { margin-left: 8px; }
.tray-vol { margin-left: 7px; }
.clock {
  display: flex;
  flex-direction: column;
  align-items: flex-end;
  margin: -1px 0 0 12px;
  font: 11.300px/17px "Open Sans", sans-serif;
  color: #e8e8e8;
}
.show-desktop { width: 1px; height: 40px; background: #555; margin-left: 9px; }
```
